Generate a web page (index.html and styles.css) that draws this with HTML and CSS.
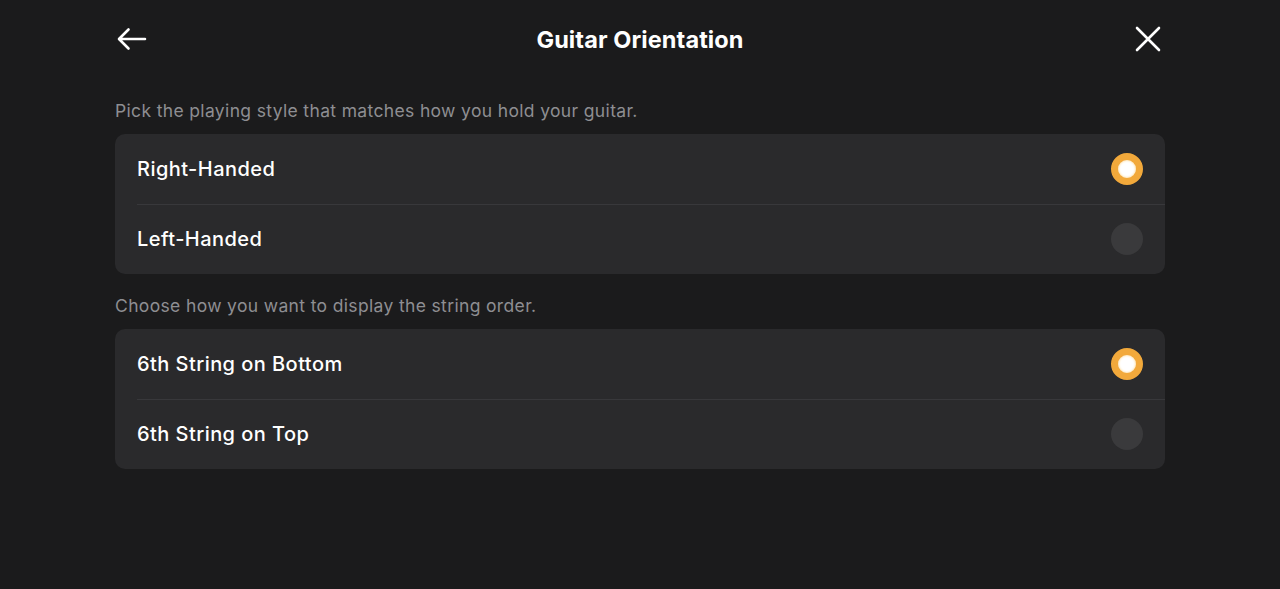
FILE: index.html
```html
<!DOCTYPE html>
<html>
<head>
<meta charset="utf-8">
<link rel="stylesheet" href="styles.css">
</head>
<body>
<div class="page">
  <header class="header">
    <button class="icon-btn back" aria-label="Back">
      <svg width="32" height="30" viewBox="0 0 32 30" fill="none" stroke="#fff" stroke-width="2.6" stroke-linecap="round" stroke-linejoin="round"><path d="M30 15H4.5M13.5 5.5L4 15 13.5 24.5"/></svg>
    </button>
    <h1 class="title">Guitar Orientation</h1>
    <button class="icon-btn close" aria-label="Close">
      <svg width="26" height="26" viewBox="0 0 26 26" fill="none" stroke="#fff" stroke-width="2.6" stroke-linecap="round"><path d="M2 2L24 24M24 2L2 24"/></svg>
    </button>
  </header>

  <p class="hint">Pick the playing style that matches how you hold your guitar.</p>
  <div class="card">
    <div class="row"><span class="label">Right-Handed</span><span class="radio on"></span></div>
    <div class="row"><span class="label">Left-Handed</span><span class="radio"></span></div>
  </div>

  <p class="hint">Choose how you want to display the string order.</p>
  <div class="card">
    <div class="row"><span class="label">6th String on Bottom</span><span class="radio on"></span></div>
    <div class="row"><span class="label">6th String on Top</span><span class="radio"></span></div>
  </div>
</div>
</body>
</html>
```
FILE: styles.css
```css
html, body {
  margin: 0;
  padding: 0;
  background: #1b1b1c;
  font-family: Inter, "Noto Sans", "Liberation Sans", sans-serif;
  color: #fff;
  height: 100%;
}
.page {
  width: 1050px;
  margin: 0 auto;
  padding-top: 21px;
}
.header {
  display: flex;
  align-items: center;
  justify-content: space-between;
  height: 36px;
}
.icon-btn {
  background: none;
  border: 0;
  padding: 0;
  width: 50px;
  height: 36px;
  display: flex;
  align-items: center;
  cursor: pointer;
}
.icon-btn.back { justify-content: flex-start; }
.icon-btn.close { justify-content: flex-end; padding-right: 4px; box-sizing: border-box; }
.title {
  margin: 0;
  font-size: 23.5px;
  font-weight: 700;
  letter-spacing: 0.1px;
}
.hint {
  margin: 43px 0 12px;
  font-size: 17.5px;
  color: #8e8e92;
  line-height: 22px;
  letter-spacing: 0.35px;
}
.card + .hint { margin-top: 21px; }
.card {
  background: #2a2a2c;
  border-radius: 10px;
  overflow: hidden;
}
.row {
  height: 70px;
  display: flex;
  align-items: center;
  justify-content: space-between;
  padding: 0 22px;
  position: relative;
}
.row + .row::before {
  content: "";
  position: absolute;
  left: 22px;
  right: 0;
  top: 0;
  height: 1px;
  background: #38383b;
}
.label {
  font-size: 20px;
  font-weight: 500;
  letter-spacing: 0.45px;
}
.radio {
  width: 32px;
  height: 32px;
  border-radius: 50%;
  background: #3a3a3c;
  box-sizing: border-box;
}
.radio.on {
  background: #fff;
  border: 7px solid #f2a93b;
  box-shadow: inset 0 0 2px 1px #ffe7b8;
}
```
